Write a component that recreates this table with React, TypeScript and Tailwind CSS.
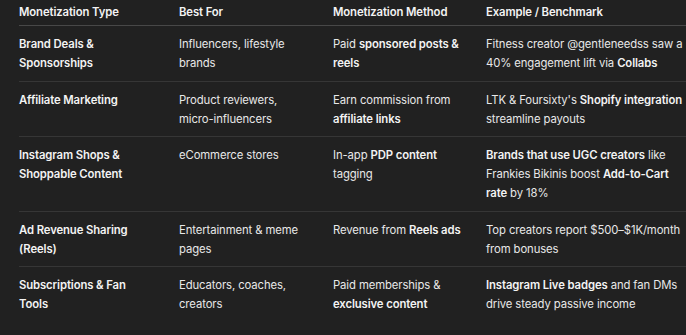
import React from 'react';

type Row = {
    type: React.ReactNode;
    bestFor: React.ReactNode;
    method: React.ReactNode;
    example: React.ReactNode;
};

const B: React.FC<{ children: React.ReactNode }> = ({ children }) => (
    <span className="font-semibold text-[#f3f3f3]">{children}</span>
);

const rows: Row[] = [
    {
        type: <>Brand Deals &amp;<br />Sponsorships</>,
        bestFor: <>Influencers, lifestyle<br />brands</>,
        method: <>Paid <B>sponsored posts &amp;</B><br /><B>reels</B></>,
        example: <>Fitness creator @gentleneedss saw a<br />40% engagement lift via <B>Collabs</B></>,
    },
    {
        type: <>Affiliate Marketing</>,
        bestFor: <>Product reviewers,<br />micro-influencers</>,
        method: <>Earn commission from<br /><B>affiliate links</B></>,
        example: <>LTK &amp; Foursixty's <B>Shopify integration</B><br />streamline payouts</>,
    },
    {
        type: <>Instagram Shops &amp;<br />Shoppable Content</>,
        bestFor: <>eCommerce stores</>,
        method: <>In-app <B>PDP content</B><br />tagging</>,
        example: <><B>Brands that use UGC creators</B> like<br />Frankies Bikinis boost <B>Add-to-Cart</B><br /><B>rate</B> by 18%</>,
    },
    {
        type: <>Ad Revenue Sharing<br />(Reels)</>,
        bestFor: <>Entertainment &amp; meme<br />pages</>,
        method: <>Revenue from <B>Reels ads</B></>,
        example: <>Top creators report $500–$1K/month<br />from bonuses</>,
    },
    {
        type: <>Subscriptions &amp; Fan<br />Tools</>,
        bestFor: <>Educators, coaches,<br />creators</>,
        method: <>Paid memberships &amp;<br /><B>exclusive content</B></>,
        example: <><B>Instagram Live badges</B> and fan DMs<br />drive steady passive income</>,
    },
];

const cols = 'grid grid-cols-[160px_154px_153px_1fr]';

export default function App() {
    return (
        <div
            className="w-[686px] h-[335px] overflow-hidden bg-[#212121] text-[#e8e8e8] text-[11.3px] tracking-[-0.1px] leading-[19px]"
            style={{ fontFamily: 'Inter, "Liberation Sans", sans-serif' }}
        >
            <div className="ml-[19px] -mr-[40px]">
                {/* Header */}
                <div className={`${cols} pt-[3px] pb-[3px] border-b border-[#484848] font-semibold text-[#f3f3f3] whitespace-nowrap`}>
                    <div>Monetization Type</div>
                    <div>Best For</div>
                    <div>Monetization Method</div>
                    <div>Example / Benchmark</div>
                </div>

                {rows.map((r, i) => (
                    <div
                        key={i}
                        className={`${cols} pt-[9px] pb-[7.5px] whitespace-nowrap ${i < rows.length - 1 ? 'border-b border-[#363636]' : ''}`}
                    >
                        <div className="font-semibold text-[#f3f3f3]">{r.type}</div>
                        <div>{r.bestFor}</div>
                        <div>{r.method}</div>
                        <div>{r.example}</div>
                    </div>
                ))}
            </div>
        </div>
    );
}
